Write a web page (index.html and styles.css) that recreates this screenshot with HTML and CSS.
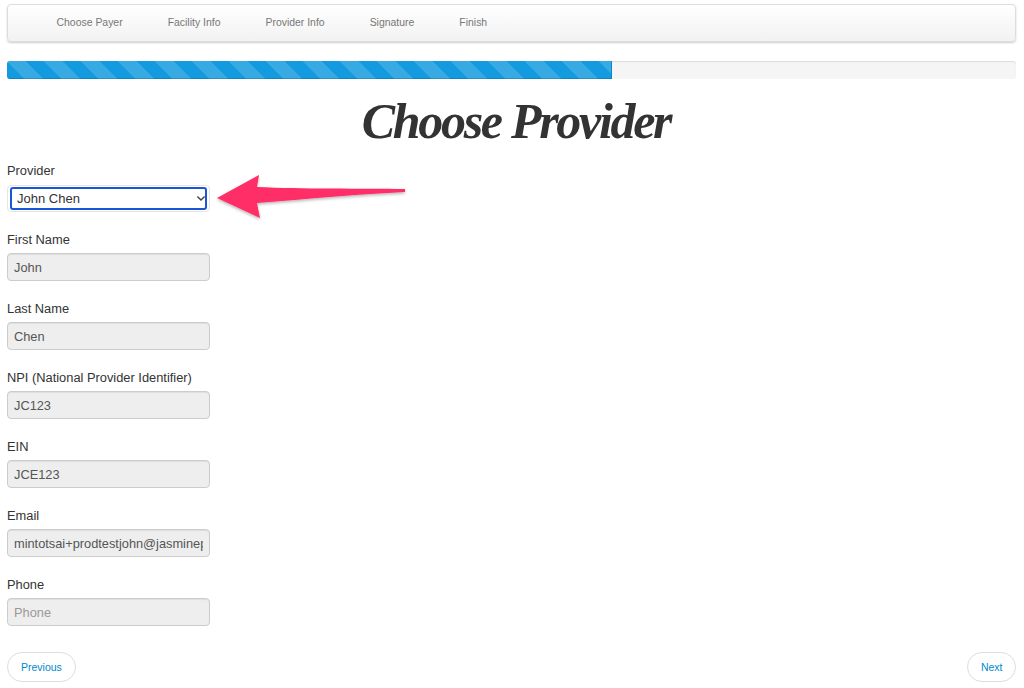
FILE: index.html
```html
<!DOCTYPE html>
<html>
<head>
<meta charset="utf-8">
<title>Choose Provider</title>
<link rel="stylesheet" href="styles.css">
</head>
<body>
<div class="navbar">
	<a href="#">Choose Payer</a>
	<a href="#">Facility Info</a>
	<a href="#">Provider Info</a>
	<a href="#">Signature</a>
	<a href="#">Finish</a>
</div>
<div class="progress"><div class="bar" style="width:60%"></div></div>
<h1>Choose Provider</h1>
<form class="form">
	<div class="group">
		<label>Provider</label>
		<div class="select_wrap">
			<select class="select"><option>John Chen</option></select>
			<svg class="chevron" width="10" height="7" viewBox="0 0 10 7"><path d="M1.4 1.4 5 5 8.6 1.4" fill="none" stroke="#444" stroke-width="1.4"/></svg>
		</div>
	</div>
	<div class="group">
		<label>First Name</label>
		<input class="input" readonly value="John">
	</div>
	<div class="group">
		<label>Last Name</label>
		<input class="input" readonly value="Chen">
	</div>
	<div class="group">
		<label>NPI (National Provider Identifier)</label>
		<input class="input" readonly value="JC123">
	</div>
	<div class="group">
		<label>EIN</label>
		<input class="input" readonly value="JCE123">
	</div>
	<div class="group">
		<label>Email</label>
		<input class="input" readonly value="mintotsai+prodtestjohn@jasminepharmacy.com">
	</div>
	<div class="group">
		<label>Phone</label>
		<input class="input" readonly placeholder="Phone">
	</div>
</form>
<div class="pager">
	<a class="page_btn" href="#">Previous</a>
	<a class="page_btn" href="#">Next</a>
</div>
<!-- annotation arrow -->
<svg class="arrow" width="196" height="52" viewBox="0 0 196 52">
	<defs><filter id="soft" x="-10%" y="-20%" width="120%" height="150%"><feDropShadow dx="0" dy="1.5" stdDeviation="1.5" flood-color="#000" flood-opacity="0.3"/></filter></defs>
	<path d="M6 25 48 2 46 14 C90 16 150 15.5 194 16 L194 19 C150 21 95 26 46 30 L49 45 Z" fill="#ff2d66" filter="url(#soft)"/>
</svg>
</body>
</html>
```

FILE: styles.css
```css
* { box-sizing: border-box; }
body { margin: 0; padding: 4px 8px 0 7px; background: #fff; color: #333; font: 13px "Liberation Sans", Arial, sans-serif; position: relative; height: 688px; overflow: hidden; }
a { text-decoration: none; }

.navbar { display: flex; height: 38px; padding: 0 26px; align-items: center; background: linear-gradient(to bottom, #fff, #f2f2f2); border: 1px solid #ddd; border-radius: 4px; box-shadow: 0 1px 2px rgba(0,0,0,.2); }
.navbar a { padding: 0 22.5px; color: #777; font-size: 10.45px; line-height: 34px; }

.progress { height: 18px; margin-top: 19px; background: #f5f5f5; border-radius: 3px; box-shadow: inset 0 1px 1px rgba(0,0,0,.1); overflow: hidden; }
.bar { height: 18px; background-color: #149bdf; background-image: linear-gradient(45deg, rgba(255,255,255,.15) 25%, transparent 25%, transparent 50%, rgba(255,255,255,.15) 50%, rgba(255,255,255,.15) 75%, transparent 75%, transparent); background-size: 37px 37px; box-shadow: inset 0 -1px 0 rgba(0,0,0,.15); border-right: 1px solid #0e84c4; }

h1 { margin: 12px 0 0; height: 64px; text-align: center; padding-left: 9px; color: #333; font: italic bold 50px/60px "Liberation Serif", serif; letter-spacing: -2.3px; }

.form { display: flex; flex-direction: column; gap: 19px; margin-top: 7px; }
.group { display: flex; flex-direction: column; width: 203px; height: 50px; }
.group label { flex: none; height: 22px; line-height: 18px; color: #333; font-size: 12.85px; white-space: nowrap; }
.input { flex: none; width: 203px; height: 28px; padding: 0 6px; background: #eee; color: #555; font: 12.8px "Liberation Sans", Arial, sans-serif; border: 1px solid #ccc; border-radius: 4px; box-shadow: inset 0 1px 1px rgba(0,0,0,.07); outline: none; }
.input::placeholder { color: #999; }

.select_wrap { flex: none; position: relative; width: 203px; height: 27px; margin-top: 1px; padding: 1px 2px; border: 1px solid #e6e6e6; border-radius: 4px; }
.select { display: block; width: 100%; height: 100%; padding: 0 0 0 5px; appearance: none; background: #fff; color: #333; font: 13px "Liberation Sans", Arial, sans-serif; border: 2px solid #1a56d6; border-radius: 3px; outline: none; }
.chevron { position: absolute; top: 9px; right: 3px; }

.pager { display: flex; justify-content: space-between; margin-top: 26px; }
.page_btn { height: 30px; padding: 0 13px; color: #08c; font-size: 10.5px; line-height: 28px; background: #fff; border: 1px solid #ddd; border-radius: 15px; }
.page_btn:last-child { padding: 0 12.5px; }

.arrow { position: absolute; left: 211px; top: 173px; }
```
